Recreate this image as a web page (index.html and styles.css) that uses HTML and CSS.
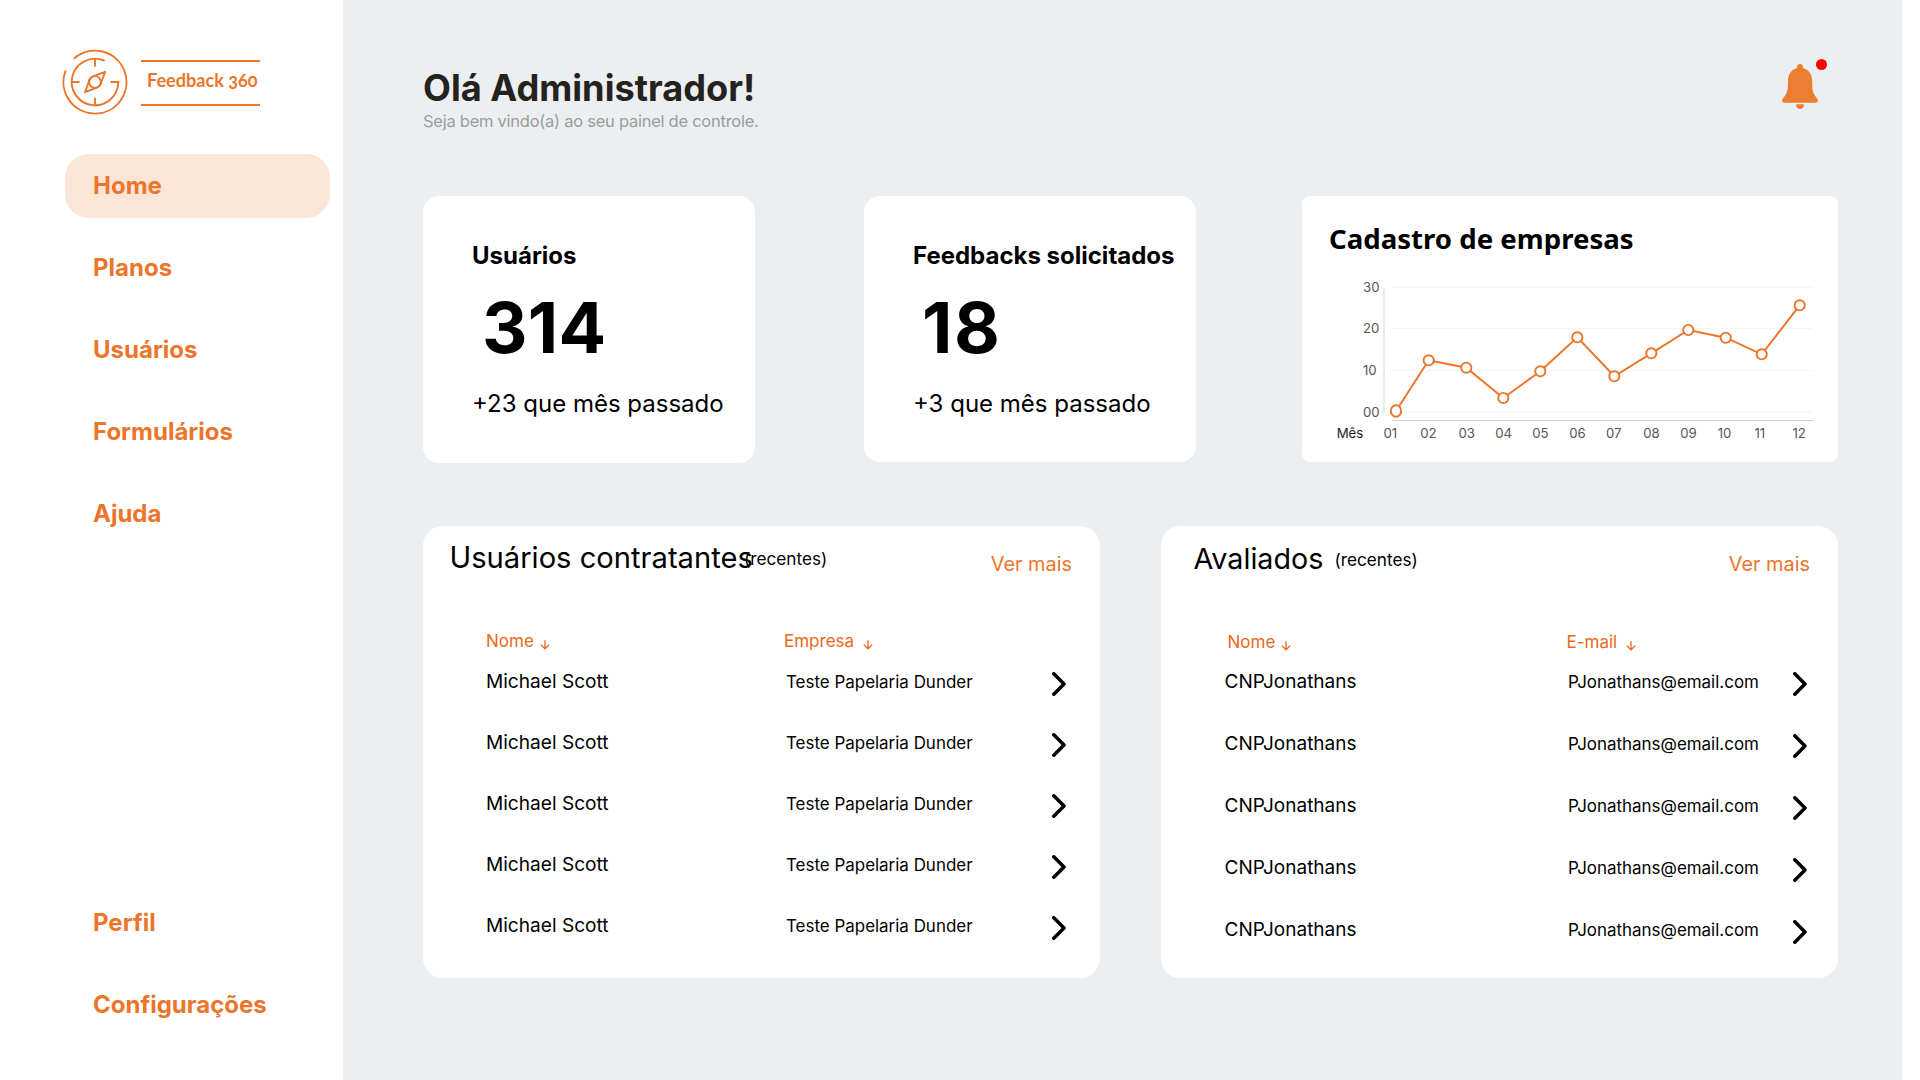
FILE: index.html
```html
<!DOCTYPE html>
<html lang="pt-BR">
<head>
<meta charset="utf-8">
<title>Feedback 360</title>
<link rel="stylesheet" href="styles.css">
</head>
<body>
<svg class="defs" width="0" height="0">
  <symbol id="chevron" viewBox="0 0 14 24"><path d="M1.8 1.8 12 12 1.8 22.2" fill="none" stroke="#000" stroke-width="3.5" stroke-linecap="round" stroke-linejoin="round"/></symbol>
  <symbol id="arrow" viewBox="0 0 10 10"><path d="M5 .2V8.7M.8 4.6 5 8.8 9.2 4.6" fill="none" stroke="#e8681b" stroke-width="1.3"/></symbol>
</svg>

<aside class="sidebar">
  <div class="brand">
    <svg class="compass" width="66" height="66" viewBox="-33 -33 66 66" fill="none" stroke="#ec752a" stroke-width="1.9" stroke-linecap="round">
      <path d="M-20.8-23.6A31.5 31.5 0 1 1-29.6-10.8"/>
      <path d="M9-21.5A23.3 23.3 0 1 0 23.3 0H16.2"/>
      <path d="M0-23V-16.2M-23 0H-16.2M0 23V16.4"/>
      <circle r="5.9"/>
      <path stroke-linejoin="round" d="M-6.300 0-10 10.200 0 6.300M0-6.300 10.200-10.200 6.300 0M-6.300 0Q-6-4.500 0-6.300M6.300 0Q6 4.500 0 6.300"/>
    </svg>
    <div class="wordmark">Feedback 360</div>
  </div>
  <nav class="menu">
    <a class="item active">Home</a>
    <a class="item">Planos</a>
    <a class="item">Usuários</a>
    <a class="item">Formulários</a>
    <a class="item">Ajuda</a>
  </nav>
  <nav class="menu menu-bottom">
    <a class="item">Perfil</a>
    <a class="item">Configurações</a>
  </nav>
</aside>

<main class="content">
  <header class="top">
    <div>
      <h1>Olá Administrador!</h1>
      <p class="welcome">Seja bem vindo(a) ao seu painel de controle.</p>
    </div>
    <div class="bell">
      <svg width="36" height="45" viewBox="0 0 36 45" fill="#ed7d31">
        <path d="M18 0c-1.900 0-3 1.300-3 3v1C9.500 5.300 6 10.500 6 16.500c0 9-.4 12.500-4.800 17.500C-.8 36.200 0 38.700 2.400 38.700h31.200c2.400 0 3.200-2.500 1.200-4.700C30.400 29 30.200 25.500 30.200 16.500 30.200 10.500 26.500 5.300 21 4V3c0-1.700-1.100-3-3-3z"/>
        <path d="M14 40.200h8c0 2.800-1.700 4.800-4 4.800s-4-2-4-4.800z"/>
      </svg>
      <span class="dot"></span>
    </div>
  </header>

  <section class="stats">
    <article class="card stat stat-users">
      <h2>Usuários</h2>
      <div class="number">314</div>
      <p>+23 que mês passado</p>
    </article>
    <article class="card stat stat-feedbacks">
      <h2>Feedbacks solicitados</h2>
      <div class="number">18</div>
      <p>+3 que mês passado</p>
    </article>
    <article class="card chart">
      <h2>Cadastro de empresas</h2>
      <svg width="535" height="206" viewBox="0 0 535 206">
        <g fill="none" stroke="#f5f5f6">
          <path stroke-width="2" stroke="#f8f8f8" d="M89 31H511M89 156H509"/>
          <path d="M87 72.500H509M87 114.500H509"/>
        </g>
        <path fill="none" stroke="#e2e2e2" stroke-width="1.500" d="M81 32.500V157"/>
        <path fill="none" stroke="#d2d2d2" d="M89 164.500H511"/>
        <polyline class="line" points="93,155 125.700,104.300 163.300,111.700 200.300,142 237.300,115.300 274.300,81.300 311.300,120.300 348.300,97.300 385.300,74 422.700,81.700 458.700,98.300 496.700,49.300"/>
        <g class="points">
          <ellipse cx="93" cy="155" rx="5.100" ry="5.800"/>
          <circle cx="125.700" cy="104.300" r="5.100"/><circle cx="163.300" cy="111.700" r="5.100"/>
          <circle cx="200.300" cy="142" r="5.100"/><circle cx="237.300" cy="115.300" r="5.100"/>
          <circle cx="274.300" cy="81.300" r="5.100"/><circle cx="311.300" cy="120.300" r="5.100"/>
          <circle cx="348.300" cy="97.300" r="5.100"/><circle cx="385.300" cy="74" r="5.100"/>
          <circle cx="422.700" cy="81.700" r="5.100"/><circle cx="458.700" cy="98.300" r="5.100"/>
          <circle cx="496.700" cy="49.300" r="5.100"/>
        </g>
        <g class="labels">
          <text x="60" y="35.600">30</text><text x="60" y="77.300">20</text><text x="60" y="119">10</text><text x="60" y="160.700">00</text>
          <text class="unit" x="33.700" y="182.300">Mês</text>
          <text x="80.500" y="182.300">01</text><text x="117.200" y="182.300">02</text><text x="155.400" y="182.300">03</text>
          <text x="192.200" y="182.300">04</text><text x="229.200" y="182.300">05</text><text x="266.200" y="182.300">06</text>
          <text x="303" y="182.300">07</text><text x="340.200" y="182.300">08</text><text x="377.200" y="182.300">09</text>
          <text x="414.700" y="182.300">10</text><text x="451.400" y="182.300">11</text><text x="489.500" y="182.300">12</text>
        </g>
      </svg>
    </article>
  </section>

  <section class="lists">
    <article class="card panel panel-users">
      <header>
        <h2>Usuários contratantes</h2><span class="recent">(recentes)</span><a class="more">Ver mais</a>
      </header>
      <div class="head"><span>Nome<svg><use href="#arrow"/></svg></span><span>Empresa<svg><use href="#arrow"/></svg></span></div>
      <div class="rows">
        <div class="row"><span>Michael Scott</span><small>Teste Papelaria Dunder</small><svg><use href="#chevron"/></svg></div>
        <div class="row"><span>Michael Scott</span><small>Teste Papelaria Dunder</small><svg><use href="#chevron"/></svg></div>
        <div class="row"><span>Michael Scott</span><small>Teste Papelaria Dunder</small><svg><use href="#chevron"/></svg></div>
        <div class="row"><span>Michael Scott</span><small>Teste Papelaria Dunder</small><svg><use href="#chevron"/></svg></div>
        <div class="row"><span>Michael Scott</span><small>Teste Papelaria Dunder</small><svg><use href="#chevron"/></svg></div>
      </div>
    </article>
    <article class="card panel panel-rated">
      <header>
        <h2>Avaliados</h2><span class="recent">(recentes)</span><a class="more">Ver mais</a>
      </header>
      <div class="head"><span>Nome<svg><use href="#arrow"/></svg></span><span>E-mail<svg><use href="#arrow"/></svg></span></div>
      <div class="rows">
        <div class="row"><span>CNPJonathans</span><small>PJonathans@email.com</small><svg><use href="#chevron"/></svg></div>
        <div class="row"><span>CNPJonathans</span><small>PJonathans@email.com</small><svg><use href="#chevron"/></svg></div>
        <div class="row"><span>CNPJonathans</span><small>PJonathans@email.com</small><svg><use href="#chevron"/></svg></div>
        <div class="row"><span>CNPJonathans</span><small>PJonathans@email.com</small><svg><use href="#chevron"/></svg></div>
        <div class="row"><span>CNPJonathans</span><small>PJonathans@email.com</small><svg><use href="#chevron"/></svg></div>
      </div>
    </article>
  </section>
</main>
</body>
</html>
```
FILE: styles.css
```css
* { box-sizing: border-box; margin: 0; padding: 0; }
body {
  display: flex;
  width: 1920px;
  height: 1080px;
  overflow: hidden;
  background: #fff;
  color: #000;
  font-family: Inter, "Liberation Sans", sans-serif;
}
.defs { position: absolute; }
svg { display: block; flex: none; }
h1, h2, p, span, a, small { white-space: nowrap; }

/* Sidebar */
.sidebar { width: 343px; flex: none; padding-top: 49px; }
.brand { display: flex; align-items: flex-start; height: 105px; padding-left: 62.200px; }
.wordmark {
  width: 119px;
  height: 46px;
  margin: 11px 0 0 12.800px;
  padding-left: 6px;
  border-top: 2px solid #ec752a;
  border-bottom: 2px solid #ec752a;
  color: #ec752a;
  font: 700 18.100px/37px Lato, sans-serif;
  font-variant-numeric: oldstyle-nums;
  white-space: nowrap;
}
.menu { display: flex; flex-direction: column; gap: 18px; padding: 0 13px 0 65px; }
.menu-bottom { margin-top: 345px; }
.item {
  height: 64px;
  padding-left: 28px;
  border-radius: 24px;
  color: #ec752a;
  font-size: 24px;
  font-weight: 700;
  line-height: 64px;
}
.active { background: #fbe5d7; }

/* Main area */
.content { width: 1559px; flex: none; padding: 0 64px 0 80px; background: #ebeff2; }
.top { display: flex; justify-content: space-between; height: 196px; padding-top: 66px; }
h1 { color: #25221e; font-size: 36.200px; line-height: 44px; }
.welcome { margin-top: 1px; color: #9c9c9a; font-size: 16.500px; letter-spacing: -.26px; line-height: 20px; }
.bell { position: relative; width: 36px; height: 45px; margin: -2px 20px 0 0; }
.dot {
  position: absolute;
  top: -5px;
  left: 34px;
  width: 11px;
  height: 11px;
  border-radius: 50%;
  background: #f00;
}
.card { background: #fff; }

.stats { display: flex; align-items: flex-start; height: 330px; }
.stat { width: 332px; height: 266px; padding: 45px 0 0 49px; border-radius: 16px; }
.stat h2 { font-size: 24px; line-height: 30px; }
.stat p { margin-top: 19px; font-size: 24px; line-height: 30px; }
.number { margin-top: 15px; font-size: 70.500px; font-weight: 700; line-height: 84px; }
.stat-users { height: 267px; }
.stat-users .number { padding-left: 10px; letter-spacing: .004em; }
.stat-feedbacks { margin-left: 109px; }
.stat-feedbacks .number { padding-left: 9px; letter-spacing: .022em; }
.chart { width: 536px; height: 266px; margin-left: 106px; padding: 24px 0 0 1px; border-radius: 8px; }
.chart h2 { padding-left: 26px; font: 700 27.600px/36px "Noto Sans", sans-serif; }
.line { fill: none; stroke: #ec752a; stroke-width: 2; }
.points { fill: #fff; stroke: #ec752a; stroke-width: 1.900; }
.labels { fill: #555; font-size: 13.200px; }
.unit { fill: #222; }

/* Lists */
.lists { display: flex; gap: 61px; }
.panel { width: 677px; height: 452px; border-radius: 20px; }
.panel header { display: flex; height: 104.500px; padding: 13.500px 28px 0 26.500px; }
.panel h2 { width: 294.500px; font-size: 29.150px; font-weight: 400; line-height: 36px; }
.recent { margin-top: 9px; font-size: 17.200px; line-height: 20px; }
.more { margin: 12.500px 0 0 auto; color: #ec752a; font-size: 19.900px; line-height: 24px; }
.head { display: flex; height: 20px; padding-left: 63px; color: #e8681b; font-size: 17px; line-height: 20px; }
.head span { display: flex; }
.head span:first-child { width: 298px; }
.head svg { width: 10px; height: 10px; margin: 9px 0 0 6px; }
.head span:last-child svg { margin-left: 8.500px; }
.row { display: grid; grid-template-columns: 300px 265.500px 14px; align-items: center; height: 61px; padding-left: 63px; font-size: 19.100px; }
.row small { padding-top: 1px; font-size: 16.950px; }
.row svg { width: 14px; height: 24px; margin-top: 6px; }
.panel-rated header { height: 105.500px; padding: 14.500px 28px 0 32.500px; }
.panel-rated h2 { width: 141px; font-size: 28.700px; }
.panel-rated .more { margin-top: 11.500px; }
.panel-rated .head { padding-left: 66.500px; }
.panel-rated .head span:first-child { width: 339px; }
.panel-rated .rows { margin-top: -1px; }
.panel-rated .row { grid-template-columns: 343.500px 225px 14px; height: 62px; padding-left: 63.500px; font-size: 19px; }
.panel-rated .row svg { margin-top: 5px; }
```
